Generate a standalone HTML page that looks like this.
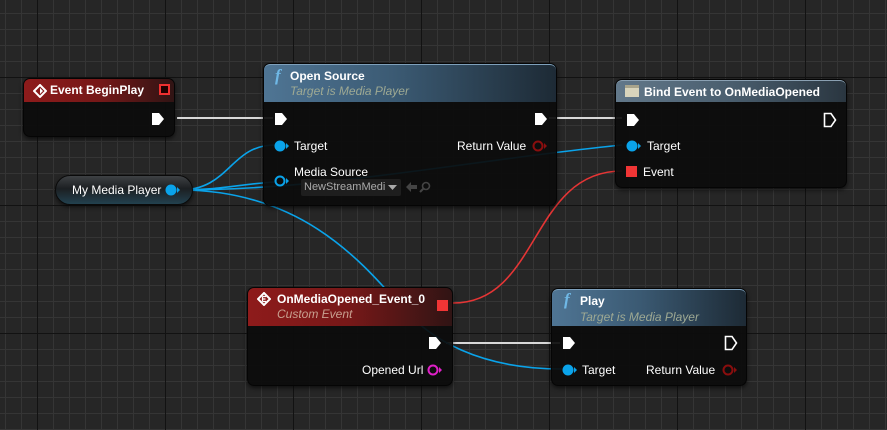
<!DOCTYPE html>
<html><head><meta charset="utf-8"><style>
*{margin:0;padding:0;box-sizing:border-box}
body{width:887px;height:430px;overflow:hidden;position:relative;font-family:"Liberation Sans",sans-serif;color:#fff;
background-color:#262626;
background-image:
linear-gradient(to right,#121212 1px,transparent 1px),
linear-gradient(to bottom,#121212 1px,transparent 1px),
linear-gradient(to right,#353535 1px,transparent 1px),
linear-gradient(to bottom,#353535 1px,transparent 1px);
background-size:128px 128px,128px 128px,16px 16px,16px 16px;
background-position:37px 0,0 77px,5px 0,0 13px}
svg.w{position:absolute;left:0;top:0}
.node{position:absolute;background:rgba(12,12,12,0.93);border:1px solid #050505;border-radius:7px;box-shadow:0 2px 4px rgba(0,0,0,.6)}
.hdr{position:absolute;left:0;top:0;right:0;border-radius:6px 6px 0 0;padding-left:26px;font-size:12px;font-weight:bold}
.red{background:linear-gradient(to right,#8e1b1b 0%,#761818 50%,#301414 100%)}
.blue{background:linear-gradient(to right,#4f7594 0%,#3b5a73 45%,#1d2a35 100%)}
.gray{background:linear-gradient(to right,#62788a 0%,#4a5e6e 50%,#2a3640 100%)}
.sub{font-style:italic;font-weight:normal;color:#9ea993;font-size:12px}
.t{position:absolute;font-size:12px;white-space:nowrap}
.f{position:absolute;color:#6fb8e6;font-family:"Liberation Serif",serif;font-style:italic;font-weight:bold;font-size:17px}
</style></head><body>
<svg class="w" width="887" height="430">
<g fill="none" stroke-width="1.6">
<path d="M177,118 L273,118" stroke="#d8d8d8" stroke-width="2"/>
<path d="M549,118 L622,118" stroke="#d8d8d8" stroke-width="2"/>
<path d="M446,343 L560,343" stroke="#d8d8d8" stroke-width="2"/>
<path d="M180,190 C230,190 230,145 275,145" stroke="#0aa3ea"/>
<path d="M180,190 C220,190 240,184 275,182" stroke="#0aa3ea"/>
<path d="M180,190 C330,190 470,160 622,145" stroke="#0aa3ea"/>
<path d="M180,190 C300,190 360,260 400,305 C430,340 480,369 562,369" stroke="#0aa3ea"/>
<path d="M453,303 C540,303 530,171 622,171" stroke="#e53535"/>
</g></svg>

<div class="node" style="left:23px;top:78px;width:152px;height:59px">
<div class="hdr red" style="height:23px;line-height:23px">Event BeginPlay</div>
<svg style="position:absolute;left:9px;top:5px" width="14" height="14"><path d="M7,1 L13,7 L7,13 L1,7Z" fill="none" stroke="#fff" stroke-width="2"/><path d="M7,4 L10,7 L7,10" fill="#fff"/></svg>
<div style="position:absolute;left:135px;top:5px;width:11px;height:11px;border:2px solid #f03030;background:#200"></div>
<svg style="position:absolute;left:127px;top:33px" width="14" height="14"><path d="M1,1 H8 L13,7 L8,13 H1Z" fill="#fff"/></svg>
</div>

<div style="position:absolute;left:55px;top:175px;width:138px;height:30px;border-radius:15px;background:linear-gradient(to bottom,#3e4144 0%,#1c1f22 45%,#22414f 100%);border:1px solid #0a0a0a;box-shadow:0 2px 4px rgba(0,0,0,.6)"></div>
<div class="t" style="left:72px;top:183px">My Media Player</div>
<svg style="position:absolute;left:165px;top:183px" width="16" height="14"><circle cx="6" cy="7" r="5.5" fill="#0aa3ea"/><path d="M12,4 L15,7 L12,10Z" fill="#0aa3ea"/></svg>

<div class="node" style="left:263px;top:63px;width:294px;height:143px">
<div class="hdr blue" style="height:38px;padding-top:4px;line-height:15px;border-top:1px solid #7ea0bb">Open Source<br><span class="sub">Target is Media Player</span></div>
<div class="f" style="left:11px;top:2px">f</div>
<svg style="position:absolute;left:10px;top:48px" width="14" height="14"><path d="M1,1 H8 L13,7 L8,13 H1Z" fill="#fff"/></svg>
<svg style="position:absolute;left:270px;top:48px" width="14" height="14"><path d="M1,1 H8 L13,7 L8,13 H1Z" fill="#fff"/></svg>
<svg style="position:absolute;left:10px;top:75px" width="16" height="14"><circle cx="6" cy="7" r="5.5" fill="#0aa3ea"/><path d="M12,4 L15,7 L12,10Z" fill="#0aa3ea"/></svg>
<div class="t" style="left:30px;top:75px">Target</div>
<div class="t" style="left:193px;top:75px">Return Value</div>
<svg style="position:absolute;left:268px;top:75px" width="16" height="14"><circle cx="6" cy="7" r="4.5" fill="none" stroke="#8a0e0e" stroke-width="2"/><path d="M12,4 L15,7 L12,10Z" fill="#8a0e0e"/></svg>
<div class="t" style="left:30px;top:101px">Media Source</div>
<svg style="position:absolute;left:10px;top:110px" width="16" height="14"><circle cx="6" cy="7" r="4.5" fill="none" stroke="#0aa3ea" stroke-width="2"/><path d="M12,4 L15,7 L12,10Z" fill="#0aa3ea"/></svg>
<div style="position:absolute;left:37px;top:115px;width:100px;height:17px;background:#1e1e1e;border-radius:2px"></div>
<div class="t" style="left:40px;top:117px;font-size:11px;color:#aaa">NewStreamMedi</div>
<svg style="position:absolute;left:124px;top:121px" width="9" height="6"><path d="M0,0 H9 L4.5,5Z" fill="#aaa"/></svg>
<svg style="position:absolute;left:141px;top:116px" width="30" height="14"><path d="M1,7 L6,2 V5 H12 V9 H6 V12Z" fill="#444"/><circle cx="21" cy="6" r="3.5" fill="none" stroke="#444" stroke-width="1.6"/><path d="M18.5,8.5 L15,12" stroke="#444" stroke-width="2"/></svg>
</div>

<div class="node" style="left:615px;top:79px;width:232px;height:109px">
<div class="hdr gray" style="height:22px;line-height:22px;padding-left:28px;border-top:1px solid #8aa0b2">Bind Event to OnMediaOpened</div>
<div style="position:absolute;left:9px;top:5px;width:14px;height:12px;background:#d8d4bc;border-top:3px solid #a8a48c"></div>
<svg style="position:absolute;left:10px;top:33px" width="14" height="14"><path d="M1,1 H8 L13,7 L8,13 H1Z" fill="#fff"/></svg>
<svg style="position:absolute;left:207px;top:32px" width="14" height="16"><path d="M1.5,1.5 H8 L12.5,8 L8,14.5 H1.5Z" fill="none" stroke="#fff" stroke-width="1.6"/></svg>
<svg style="position:absolute;left:10px;top:59px" width="16" height="14"><circle cx="6" cy="7" r="5.5" fill="#0aa3ea"/><path d="M12,4 L15,7 L12,10Z" fill="#0aa3ea"/></svg>
<div class="t" style="left:31px;top:59px">Target</div>
<div style="position:absolute;left:10px;top:86px;width:11px;height:11px;background:#f03535"></div>
<div class="t" style="left:27px;top:85px">Event</div>
</div>

<div class="node" style="left:247px;top:287px;width:206px;height:99px">
<div class="hdr red" style="height:38px;padding-top:4px;line-height:15px;padding-left:29px">OnMediaOpened_Event_0<br><span class="sub" style="color:#c8a090">Custom Event</span></div>
<svg style="position:absolute;left:9px;top:4px" width="14" height="14"><path d="M7,1 L13,7 L7,13 L1,7Z" fill="none" stroke="#fff" stroke-width="2"/><path d="M5.5,4.5 H9 M5.5,7 H8.5 M5.5,9.5 H9 M5.5,4.5 V9.5" stroke="#fff" stroke-width="1.2"/></svg>
<div style="position:absolute;left:189px;top:12px;width:11px;height:11px;background:#f03535"></div>
<svg style="position:absolute;left:180px;top:48px" width="14" height="14"><path d="M1,1 H8 L13,7 L8,13 H1Z" fill="#fff"/></svg>
<div class="t" style="left:114px;top:75px">Opened Url</div>
<svg style="position:absolute;left:179px;top:75px" width="16" height="14"><circle cx="6" cy="7" r="4.5" fill="none" stroke="#e020c8" stroke-width="2"/><path d="M12,4 L15,7 L12,10Z" fill="#e020c8"/></svg>
</div>

<div class="node" style="left:551px;top:288px;width:196px;height:98px">
<div class="hdr blue" style="height:37px;padding-top:3px;line-height:16px;padding-left:28px;border-top:1px solid #7ea0bb">Play<br><span class="sub">Target is Media Player</span></div>
<div class="f" style="left:12px;top:1px">f</div>
<svg style="position:absolute;left:10px;top:47px" width="14" height="14"><path d="M1,1 H8 L13,7 L8,13 H1Z" fill="#fff"/></svg>
<svg style="position:absolute;left:172px;top:46px" width="14" height="16"><path d="M1.5,1.5 H8 L12.5,8 L8,14.5 H1.5Z" fill="none" stroke="#fff" stroke-width="1.6"/></svg>
<svg style="position:absolute;left:10px;top:74px" width="16" height="14"><circle cx="6" cy="7" r="5.5" fill="#0aa3ea"/><path d="M12,4 L15,7 L12,10Z" fill="#0aa3ea"/></svg>
<div class="t" style="left:30px;top:74px">Target</div>
<div class="t" style="left:94px;top:74px">Return Value</div>
<svg style="position:absolute;left:170px;top:74px" width="16" height="14"><circle cx="6" cy="7" r="4.5" fill="none" stroke="#8a0e0e" stroke-width="2"/><path d="M12,4 L15,7 L12,10Z" fill="#8a0e0e"/></svg>
</div>
</body></html>
